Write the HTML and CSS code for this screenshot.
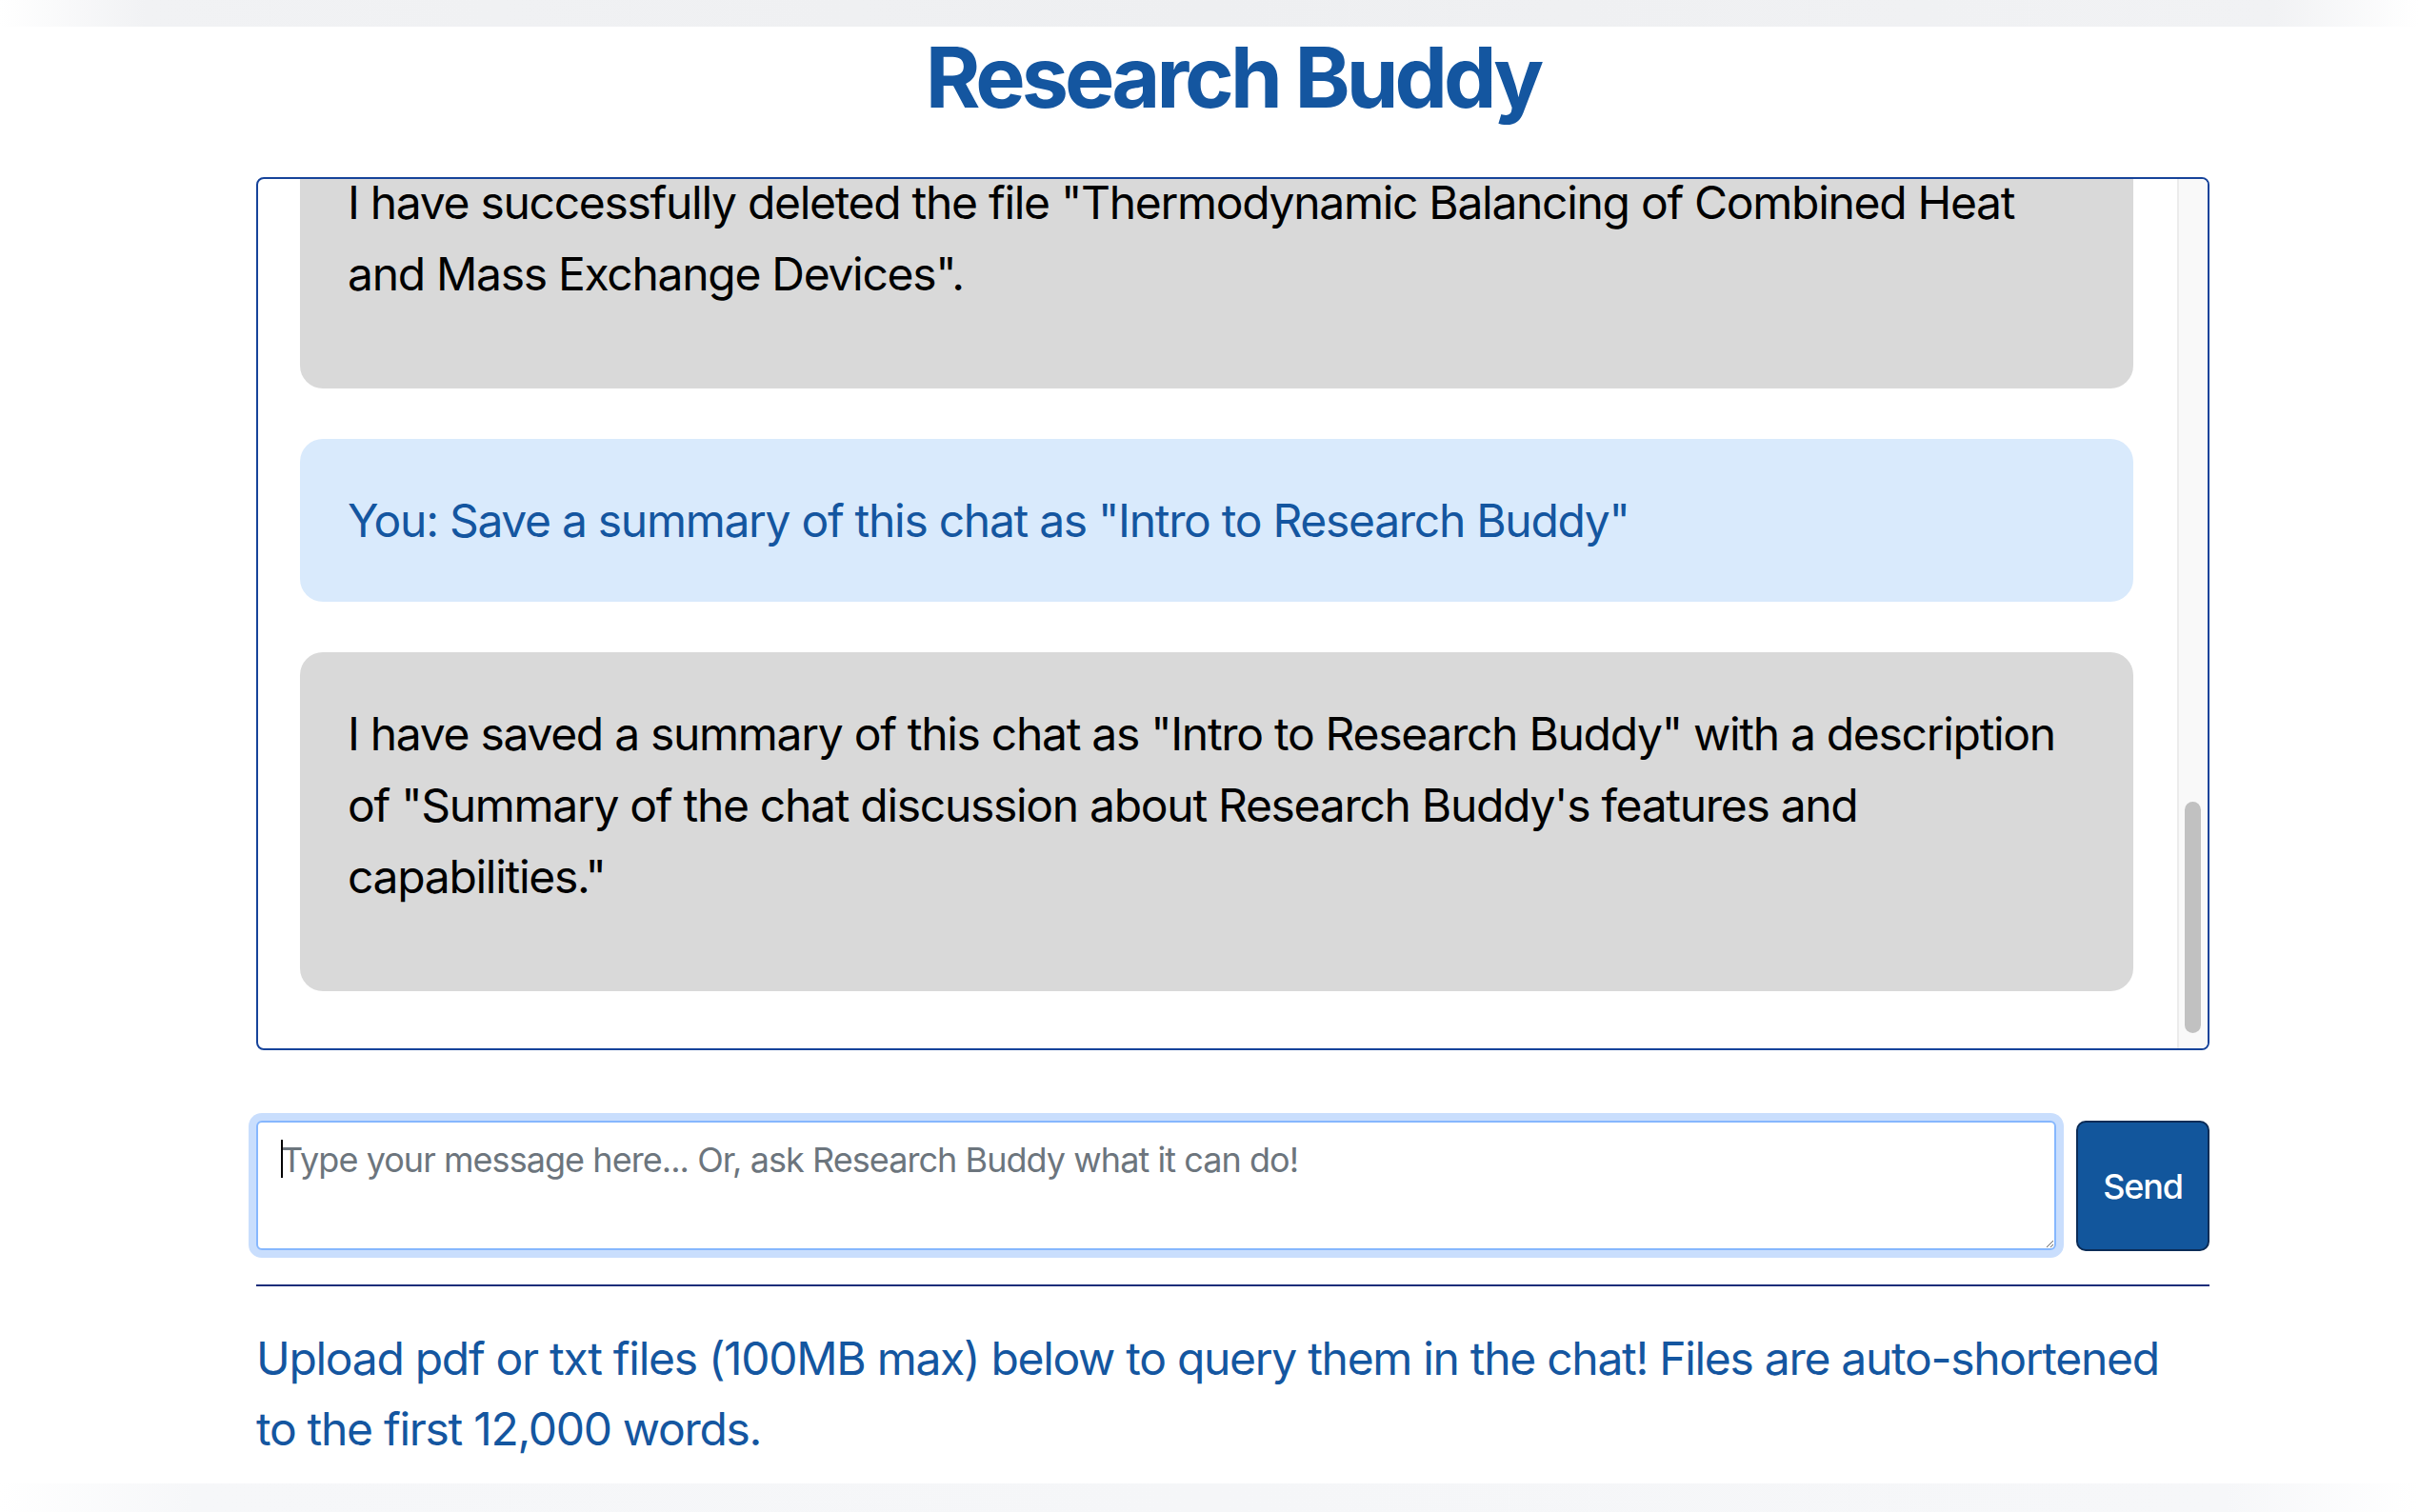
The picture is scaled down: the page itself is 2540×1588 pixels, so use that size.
FILE: index.html
```html
<!DOCTYPE html>
<html lang="en">
<head>
<meta charset="utf-8">
<title>Research Buddy</title>
<link rel="stylesheet" href="styles.css">
</head>
<body>
<div class="top-band"></div>
<main class="page">
  <h1 class="title">Research Buddy</h1>

  <section class="chat">
    <div class="chat-scroll">
      <div class="chat-inner">
        <div class="msg bot"><p>I have successfully deleted the file "Thermodynamic Balancing of Combined Heat and Mass Exchange Devices".</p></div>
        <div class="msg user">You: Save a summary of this chat as "Intro to Research Buddy"</div>
        <div class="msg bot"><p>I have saved a summary of this chat as "Intro to Research Buddy" with a description of "Summary of the chat discussion about Research Buddy's features and capabilities."</p></div>
      </div>
    </div>
    <div class="scrollbar"><div class="thumb"></div></div>
  </section>

  <form class="composer">
    <div class="input-wrap">
      <textarea class="input" placeholder="Type your message here... Or, ask Research Buddy what it can do!"></textarea>
      <span class="caret"></span>
    </div>
    <button type="button" class="send">Send</button>
  </form>

  <hr class="rule">

  <p class="upload-note">Upload pdf or txt files (100MB max) below to query them in the chat! Files are <span class="nowrap">auto-shortened</span> to the first 12,000 words.</p>
</main>
<div class="bottom-band"></div>
</body>
</html>
```

FILE: styles.css
```css
html, body {
  margin: 0;
  padding: 0;
  background: #ffffff;
  overflow: hidden;
  height: 100%;
}

body {
  font-family: "Inter", "Liberation Sans", Arial, sans-serif;
  color: #000;
}

.top-band {
  height: 28px;
  background: linear-gradient(90deg, #ffffff 0%, #f1f2f4 6%, #eeeff1 50%, #f1f2f4 94%, #ffffff 100%);
}

.bottom-band {
  position: fixed;
  left: 0;
  right: 0;
  bottom: 0;
  height: 30px;
  background: linear-gradient(90deg, #ffffff 0%, #f6f7f9 8%, #f5f6f8 50%, #f6f7f9 92%, #ffffff 100%);
}

.page {
  width: 2051px;
  margin-left: 269px;
}

.title {
  margin: 0;
  text-align: center;
  font-size: 88px;
  line-height: 106px;
  font-weight: 700;
  letter-spacing: -4px;
  color: #1456a0;
}

.chat {
  margin-top: 52px;
  height: 913px;
  border: 2px solid #16439a;
  border-radius: 8px;
  display: flex;
  overflow: hidden;
  background: #fff;
}

.chat-scroll {
  flex: 1;
  overflow: hidden;
  display: flex;
  flex-direction: column-reverse;
}

.chat-inner {
  flex-shrink: 0;
  padding: 0 46px 7px 44px;
}

.scrollbar {
  width: 32px;
  box-sizing: border-box;
  background: #f9f9f9;
  border-left: 2px solid #ececec;
  display: flex;
  flex-direction: column;
  justify-content: flex-end;
  padding: 0 7px 16px 6px;
}

.thumb {
  height: 243px;
  border-radius: 9px;
  background: #c1c1c1;
}

.msg {
  border-radius: 24px;
  padding: 48px 50px;
  margin-bottom: 53px;
  font-size: 48px;
  line-height: 75px;
  letter-spacing: -1.3px;
}

.msg p {
  margin: 0 0 35px 0;
}

.user {
  background: #d9eafc;
  color: #1456a0;
}

.bot {
  background: #d9d9d9;
  color: #000;
}

.composer {
  display: flex;
  gap: 21px;
  margin-top: 74px;
  align-items: stretch;
}

.input-wrap {
  position: relative;
  flex: 1;
  display: flex;
}

.input {
  flex: 1;
  height: 136px;
  box-sizing: border-box;
  border: 2px solid #86b7fe;
  border-radius: 6px;
  box-shadow: 0 0 0 8px #c9defd;
  padding: 15px 24px 12px 24px;
  font-family: "Inter", "Liberation Sans", Arial, sans-serif;
  font-size: 36px;
  line-height: 48px;
  letter-spacing: -0.95px;
  color: #212529;
  outline: none;
  margin: 0;
}

.input::placeholder {
  color: #6c757d;
}

.caret {
  position: absolute;
  left: 26px;
  top: 20px;
  width: 2px;
  height: 40px;
  background: #000;
}

.send {
  width: 140px;
  height: 137px;
  box-sizing: border-box;
  background: #12569c;
  border: 2px solid #0b2c57;
  border-radius: 10px;
  color: #fff;
  font-family: "Inter", "Liberation Sans", Arial, sans-serif;
  font-size: 36px;
  font-weight: 500;
  letter-spacing: -1.2px;
  padding: 0;
}

.rule {
  margin: 35px 0 0 0;
  border: 0;
  height: 2px;
  background: #1b2d7a;
}

.upload-note {
  margin: 39px 0 0 0;
  font-size: 48px;
  line-height: 74px;
  letter-spacing: -1.3px;
  color: #1456a0;
}

.nowrap {
  white-space: nowrap;
}
```
